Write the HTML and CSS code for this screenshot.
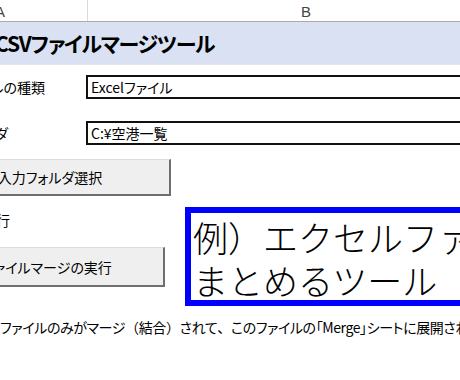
FILE: index.html
```html
<!DOCTYPE html>
<html lang="ja">
<head>
<meta charset="utf-8">
<link rel="stylesheet" href="styles.css">
</head>
<body>
<div class="sheet">
  <div class="colheads">
    <div class="colhead col-a">A</div>
    <div class="colhead col-b">B</div>
  </div>
  <div class="title">CSVファイルマージツール</div>
  <div class="row row-1">
    <div class="label">ファイルの種類</div>
    <div class="field">Excelファイル</div>
  </div>
  <div class="row row-2">
    <div class="label label-short">入力フォルダ</div>
    <div class="field">C:¥空港一覧</div>
  </div>
  <div class="btnrow">
    <button class="btn btn-select">入力フォルダ選択</button>
  </div>
  <div class="lower">
    <div class="leftcol">
      <div class="label3">マージ実行</div>
      <button class="btn btn-run">ファイルマージの実行</button>
    </div>
    <div class="note">例）エクセルファイルを<br>まとめるツール</div>
  </div>
  <div class="foot">ファイルのみがマージ<span class="fw">（</span>結合<span class="fw">）</span>されて<span class="fw">、</span>このファイルの「Merge」シートに展開されます。</div>
</div>
</body>
</html>
```

FILE: styles.css
```css
html, body {
  margin: 0;
  padding: 0;
  background: #ffffff;
}
body {
  width: 460px;
  height: 380px;
  overflow: hidden;
  font-family: "Noto Sans CJK JP", "Noto Sans", sans-serif;
  font-feature-settings: "palt";
  color: #000;
}
.sheet {
  margin-left: -87px;
  width: 640px;
}
.colheads {
  display: flex;
  height: 21px;
  border-bottom: 1px solid #ababab;
  box-shadow: 0 1px 0 #d6d6d6;
}
.colhead {
  font-family: "Liberation Sans", Arial, sans-serif;
  font-size: 15px;
  color: #444;
  text-align: center;
  line-height: 24px;
  font-feature-settings: normal;
}
.col-a {
  flex: none;
  width: 174px;
  border-right: 1px solid #dadada;
}
.col-b {
  flex: none;
  width: 436px;
}
.title {
  height: 42px;
  line-height: 42px;
  background: #d9e1f2;
  border-bottom: 1px solid #e6e6e6;
  padding-left: 82px;
  font-size: 21px;
  font-weight: bold;
  letter-spacing: -1.2px;
  white-space: nowrap;
}
.row {
  display: flex;
  align-items: center;
  height: 24px;
}
.row-1 { margin-top: 10px; }
.row-2 { margin-top: 22px; }
.label {
  flex: none;
  width: 173px;
  box-sizing: border-box;
  padding-right: 41px;
  text-align: right;
  font-size: 14px;
  line-height: 24px;
  white-space: nowrap;
  overflow: hidden;
}
.label-short {
  padding-right: 78px;
}
.field {
  flex: none;
  box-sizing: border-box;
  width: 500px;
  height: 24px;
  border: 2px solid #111;
  padding-left: 3px;
  font-size: 14px;
  line-height: 20px;
  white-space: nowrap;
}
.btnrow {
  margin-top: 14px;
  height: 37px;
}
.btn {
  display: block;
  box-sizing: border-box;
  margin: 0 0 0 17px;
  padding: 0;
  background: #efefef;
  border-style: solid;
  border-width: 1px 2px 2px 1px;
  border-color: #dcdcdc #6f6f6f #6f6f6f #dcdcdc;
  font-family: "Noto Sans CJK JP", "Noto Sans", sans-serif;
  font-feature-settings: "palt";
  font-size: 14px;
  color: #000;
  text-align: center;
  white-space: nowrap;
}
.btn-select {
  width: 241px;
  height: 37px;
}
.btn-run {
  width: 235px;
  height: 40px;
  margin-top: 15px;
}
.lower {
  display: flex;
  align-items: flex-start;
}
.leftcol {
  width: 272px;
  flex: none;
}
.label3 {
  width: 97px;
  margin-top: 12px;
  text-align: right;
  font-size: 14px;
  line-height: 24px;
  white-space: nowrap;
  overflow: hidden;
}
.note {
  flex: none;
  box-sizing: border-box;
  width: 420px;
  height: 99px;
  margin-top: 11px;
  border: 6px solid #0000ff;
  padding: 2px 0 0 2px;
  font-size: 35px;
  font-weight: 300;
  line-height: 43px;
  font-feature-settings: normal;
  white-space: nowrap;
  overflow: hidden;
}
.foot {
  margin-top: 11px;
  padding-left: 87px;
  font-size: 14px;
  line-height: 20px;
  letter-spacing: -0.4px;
  white-space: nowrap;
}
.fw {
  font-feature-settings: normal;
}
```
